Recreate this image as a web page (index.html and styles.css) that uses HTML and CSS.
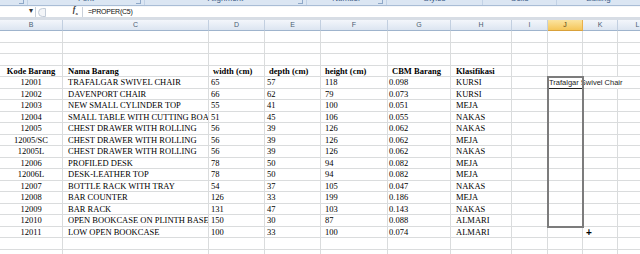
FILE: index.html
```html
<!DOCTYPE html>
<html lang="en">
<head>
  <meta charset="UTF-8">
  <title>Book1 - Excel</title>
  <link rel="stylesheet" href="styles.css">
</head>
<body>

  <!-- Ribbon group labels (bottom edge of the ribbon) -->
  <div class="ribbon">
    <div class="group g-clip"><span class="launch"></span></div>
    <div class="group g-font"><span class="glabel">Font</span><span class="launch"></span></div>
    <div class="group g-align"><span class="glabel">Alignment</span><span class="launch"></span></div>
    <div class="group g-num"><span class="glabel">Number</span><span class="launch"></span></div>
    <div class="group g-styles"><span class="glabel">Styles</span></div>
    <div class="group g-cells"><span class="glabel">Cells</span></div>
    <div class="group g-edit"><span class="glabel">Editing</span></div>
  </div>

  <!-- Formula bar -->
  <div class="fbar">
    <div class="namebox"><span class="dd">&#9662;</span></div>
    <div class="fxbox">
      <span class="grip"></span>
      <span class="fx">f<sub>x</sub></span>
    </div>
    <div class="formula">=PROPER(C5)</div>
  </div>

  <!-- Worksheet -->
  <div class="sheet">
    <div class="row colhead">
      <div>B</div><div>C</div><div>D</div><div>E</div><div>F</div><div>G</div><div>H</div><div>I</div><div class="cur">J</div><div>K</div><div>L</div>
    </div>

    <div class="row"><div></div><div></div><div></div><div></div><div></div><div></div><div></div><div></div><div></div><div></div><div></div></div>
    <div class="row"><div></div><div></div><div></div><div></div><div></div><div></div><div></div><div></div><div></div><div></div><div></div></div>
    <div class="row"><div></div><div></div><div></div><div></div><div></div><div></div><div></div><div></div><div></div><div></div><div></div></div>

    <div class="row head">
      <div>Kode Barang</div><div>Nama Barang</div><div>width (cm)</div><div>depth (cm)</div><div>height (cm)</div><div>CBM Barang</div><div>Klasifikasi</div><div></div><div></div><div></div><div></div>
    </div>

    <div class="row"><div>12001</div><div>TRAFALGAR SWIVEL CHAIR</div><div>65</div><div>57</div><div>118</div><div>0.098</div><div>KURSI</div><div></div><div class="active">Trafalgar Swivel Chair</div><div class="spill"></div><div></div></div>
    <div class="row"><div>12002</div><div>DAVENPORT CHAIR</div><div>66</div><div>62</div><div>79</div><div>0.073</div><div>KURSI</div><div></div><div></div><div></div><div></div></div>
    <div class="row"><div>12003</div><div>NEW SMALL CYLINDER TOP</div><div>55</div><div>41</div><div>100</div><div>0.051</div><div>MEJA</div><div></div><div></div><div></div><div></div></div>
    <div class="row"><div>12004</div><div>SMALL TABLE WITH CUTTING BOARD</div><div>51</div><div>45</div><div>106</div><div>0.055</div><div>NAKAS</div><div></div><div></div><div></div><div></div></div>
    <div class="row"><div>12005</div><div>CHEST DRAWER WITH ROLLING</div><div>56</div><div>39</div><div>126</div><div>0.062</div><div>NAKAS</div><div></div><div></div><div></div><div></div></div>
    <div class="row"><div>12005/SC</div><div>CHEST DRAWER WITH ROLLING</div><div>56</div><div>39</div><div>126</div><div>0.062</div><div>MEJA</div><div></div><div></div><div></div><div></div></div>
    <div class="row"><div>12005L</div><div>CHEST DRAWER WITH ROLLING</div><div>56</div><div>39</div><div>126</div><div>0.062</div><div>NAKAS</div><div></div><div></div><div></div><div></div></div>
    <div class="row"><div>12006</div><div>PROFILED DESK</div><div>78</div><div>50</div><div>94</div><div>0.082</div><div>MEJA</div><div></div><div></div><div></div><div></div></div>
    <div class="row"><div>12006L</div><div>DESK-LEATHER TOP</div><div>78</div><div>50</div><div>94</div><div>0.082</div><div>MEJA</div><div></div><div></div><div></div><div></div></div>
    <div class="row"><div>12007</div><div>BOTTLE RACK WITH TRAY</div><div>54</div><div>37</div><div>105</div><div>0.047</div><div>NAKAS</div><div></div><div></div><div></div><div></div></div>
    <div class="row"><div>12008</div><div>BAR COUNTER</div><div>126</div><div>33</div><div>199</div><div>0.186</div><div>MEJA</div><div></div><div></div><div></div><div></div></div>
    <div class="row"><div>12009</div><div>BAR RACK</div><div>131</div><div>47</div><div>103</div><div>0.143</div><div>NAKAS</div><div></div><div></div><div></div><div></div></div>
    <div class="row"><div>12010</div><div>OPEN BOOKCASE ON PLINTH BASE</div><div>150</div><div>30</div><div>87</div><div>0.088</div><div>ALMARI</div><div></div><div></div><div></div><div></div></div>
    <div class="row"><div>12011</div><div>LOW OPEN BOOKCASE</div><div>100</div><div>33</div><div>100</div><div>0.074</div><div>ALMARI</div><div></div><div></div><div><span class="fill">+</span></div><div></div></div>

    <div class="row"><div></div><div></div><div></div><div></div><div></div><div></div><div></div><div></div><div></div><div></div><div></div></div>
    <div class="row"><div></div><div></div><div></div><div></div><div></div><div></div><div></div><div></div><div></div><div></div><div></div></div>

    <!-- selected range J5:J17 -->
    <div class="sel"></div>
  </div>

</body>
</html>
```

FILE: styles.css
```css
/* Global */
body { margin: 0; width: 640px; height: 254px; overflow: hidden; background: #fff; font-family: "Liberation Sans", Arial, sans-serif; }

/* Ribbon strip */
.ribbon { display: flex; height: 5px; background: #dbe6f3; border-bottom: 1px solid #a9bdd6; overflow: hidden; }
.group { position: relative; display: flex; justify-content: center; border-right: 1px solid #c2d2e6; box-sizing: border-box; }
.glabel { font-size: 8px; line-height: 8px; margin-top: -5px; color: #3e5c86; }
.launch { position: absolute; right: 3px; bottom: 1px; width: 4px; height: 4px; border-right: 1px solid #8ea8c8; border-bottom: 1px solid #8ea8c8; }
.g-clip { width: 28px; }
.g-font { width: 117px; }
.g-align { width: 162px; }
.g-num { width: 80px; }
.g-styles { width: 96px; }
.g-cells { width: 74px; }
.g-edit { flex: 1; border-right: none; }

/* Formula bar */
.fbar { display: flex; height: 10px; border-top: 1px solid #f4f7fa; border-bottom: 3px solid #d7dde5; background: #fff; }
.namebox { width: 36px; box-sizing: border-box; border-right: 1px solid #c9d0d9; position: relative; }
.dd { position: absolute; right: 2px; top: -1px; font-size: 8px; color: #333; }
.fxbox { display: flex; align-items: center; width: 47px; box-sizing: border-box; border-right: 1px solid #c9d0d9; padding-left: 2px; }
.grip { width: 8px; height: 9px; border: 1px solid #c3ccd8; border-radius: 5px 0 0 5px; background: #f3f5f8; box-sizing: border-box; }
.fx { margin-left: auto; margin-right: 4px; font-family: "Liberation Serif", serif; font-style: italic; font-weight: bold; font-size: 8px; line-height: 8px; color: #333; }
.fx sub { font-size: 5px; }
.formula { flex: 1; padding-left: 5px; font-size: 7px; line-height: 10px; letter-spacing: -0.25px; color: #111; }

/* Worksheet grid */
.sheet { position: relative; display: grid; grid-template-columns: 63px 146px 56px 56px 67px 63px 61px 36px 35px 35px 40px; grid-template-rows: 11px; grid-auto-rows: 11.5px; }
.row { display: contents; }
.row > div { box-sizing: border-box; border-right: 1px solid #dadcdd; border-bottom: 1px solid #dadcdd; overflow: hidden; white-space: nowrap; font-family: "Liberation Serif", "Times New Roman", serif; font-size: 8.5px; line-height: 11px; color: #000; }
.row > :nth-child(1) { text-align: center; }
.row > :nth-child(2) { padding-left: 5px; }
.row > :nth-child(3) { padding-left: 2px; }
.row > :nth-child(4) { padding-left: 2px; }
.row > :nth-child(5) { padding-left: 4px; }
.row > :nth-child(6) { padding-left: 1px; }
.row > :nth-child(7) { padding-left: 5px; }

.head > div { font-weight: bold; }
.head > :nth-child(3), .head > :nth-child(4), .head > :nth-child(6) { padding-left: 4px; }

/* Column letters */
.colhead > div { font-family: "Liberation Sans", Arial, sans-serif; font-size: 7px; line-height: 10px; text-align: center; color: #4c5d72; background: linear-gradient(#f3f6fb, #dce5f1); border-right: 1px solid #c2cfe0; border-bottom: 1px solid #9fb4cd; padding: 0 !important; }
.colhead > .cur { background: linear-gradient(#fbe4a0, #f5c659); border-right-color: #eab04b; border-bottom-color: #d9a13a; color: #5b4312; }

/* Active cell and selection */
.row > .active { overflow: visible; padding-left: 1px; font-family: "Liberation Sans", Arial, sans-serif; font-size: 7.5px; color: #1b1b1b; border-bottom: 1px solid #222; }
.row > .spill { border-right-color: transparent; }
.sel { position: absolute; grid-column: 9 / 10; grid-row: 6 / 19; top: -1px; left: -1px; right: -1px; bottom: -1px; border: 2px solid #7c7c7c; pointer-events: none; }
.fill { display: inline-block; margin-left: 3px; font-family: "Liberation Sans", Arial, sans-serif; font-weight: bold; font-size: 10px; line-height: 11px; color: #000; }
```
